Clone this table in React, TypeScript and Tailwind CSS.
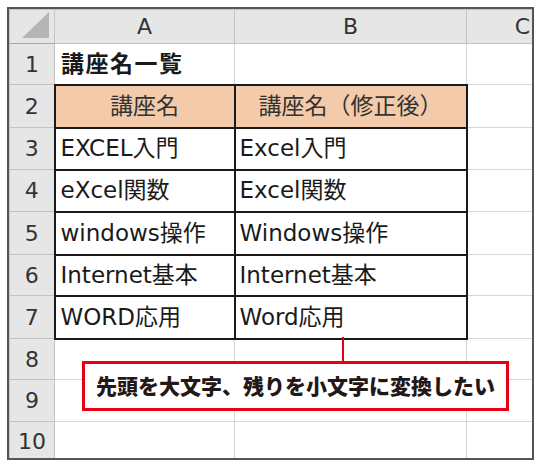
import React from "react";

const F = { fontFamily: '"DejaVu Sans", "Noto Sans CJK JP", sans-serif' };

const rows: [string, string][] = [
  ["EXCEL入門", "Excel入門"],
  ["eXcel関数", "Excel関数"],
  ["windows操作", "Windows操作"],
  ["Internet基本", "Internet基本"],
  ["WORD応用", "Word応用"],
];

const heights = [41, 43, 42, 42, 43, 41, 43, 41, 42, 39];

function RowHead({ n }: { n: number }) {
  return (
    <td className="border border-[#c3c3c3] bg-[#e6e6e6] text-center text-[22px] text-[#333] p-0">
      {n}
    </td>
  );
}

export default function App() {
  return (
    <div className="w-[540px] h-[466px] bg-white relative" style={F}>
      <div className="absolute left-[7px] top-[7px] w-[527px] h-[453px] border-2 border-[#555] overflow-hidden">
        <table className="border-collapse table-fixed" style={{ width: 569 }}>
          <colgroup>
            <col style={{ width: 45 }} />
            <col style={{ width: 180 }} />
            <col style={{ width: 232 }} />
            <col style={{ width: 112 }} />
          </colgroup>
          <tbody>
            <tr className="h-[33px]">
              <td className="border border-[#c3c3c3] border-b-[#a8a8a8] bg-[#e6e6e6] p-0 relative">
                <svg width="45" height="33" className="block">
                  <polygon points="12,28 39,28 39,2" fill="#b5b5b5" />
                </svg>
              </td>
              <td className="border border-[#c3c3c3] bg-[#e6e6e6] text-center text-[22px] text-[#333] p-0">A</td>
              <td className="border border-[#c3c3c3] bg-[#e6e6e6] text-center text-[22px] text-[#333] p-0">B</td>
              <td className="border border-[#c3c3c3] bg-[#e6e6e6] text-center text-[22px] text-[#333] p-0">C</td>
            </tr>
            <tr style={{ height: heights[0] }}>
              <RowHead n={1} />
              <td className="border border-[#d6d6d6] px-[6px] py-0 text-[23px] font-bold text-[#1a1a1a] tracking-[1.5px] whitespace-nowrap">講座名一覧</td>
              <td className="border border-[#d6d6d6]"></td>
              <td className="border border-[#d6d6d6]"></td>
            </tr>
            <tr style={{ height: heights[1] }}>
              <RowHead n={2} />
              <td className="border-2 border-[#1a1a1a] bg-[#f4cbaa] text-center text-[23px] text-[#333] p-0 whitespace-nowrap">講座名</td>
              <td className="border-2 border-[#1a1a1a] bg-[#f4cbaa] text-center text-[23px] text-[#333] p-0 whitespace-nowrap">講座名（修正後）</td>
              <td className="border border-[#d6d6d6]"></td>
            </tr>
            {rows.map(([a, b], i) => (
              <tr key={i} style={{ height: heights[i + 2] }}>
                <RowHead n={i + 3} />
                <td className="border-2 border-[#1a1a1a] px-[5px] py-0 text-[23px] text-[#1a1a1a] whitespace-nowrap">{a}</td>
                <td className="border-2 border-[#1a1a1a] px-[4px] py-0 text-[23px] text-[#1a1a1a] whitespace-nowrap">{b}</td>
                <td className="border border-[#d6d6d6]"></td>
              </tr>
            ))}
            {[8, 9, 10].map((n, i) => (
              <tr key={n} style={{ height: heights[i + 7] }}>
                <RowHead n={n} />
                <td className="border border-[#d6d6d6]"></td>
                <td className="border border-[#d6d6d6]"></td>
                <td className="border border-[#d6d6d6]"></td>
              </tr>
            ))}
          </tbody>
        </table>
      </div>
      <div className="absolute left-[342px] top-[337px] w-[2px] h-[25px] bg-[#e60012]"></div>
      <div
        className="absolute left-[82px] top-[361px] w-[427px] h-[50px] border-[3px] border-[#e60012] bg-white flex items-center justify-center text-[21px] font-black text-[#231815] whitespace-nowrap"
        style={{ fontFamily: '"Noto Sans CJK JP", sans-serif' }}
      >
        先頭を大文字、残りを小文字に変換したい
      </div>
    </div>
  );
}
